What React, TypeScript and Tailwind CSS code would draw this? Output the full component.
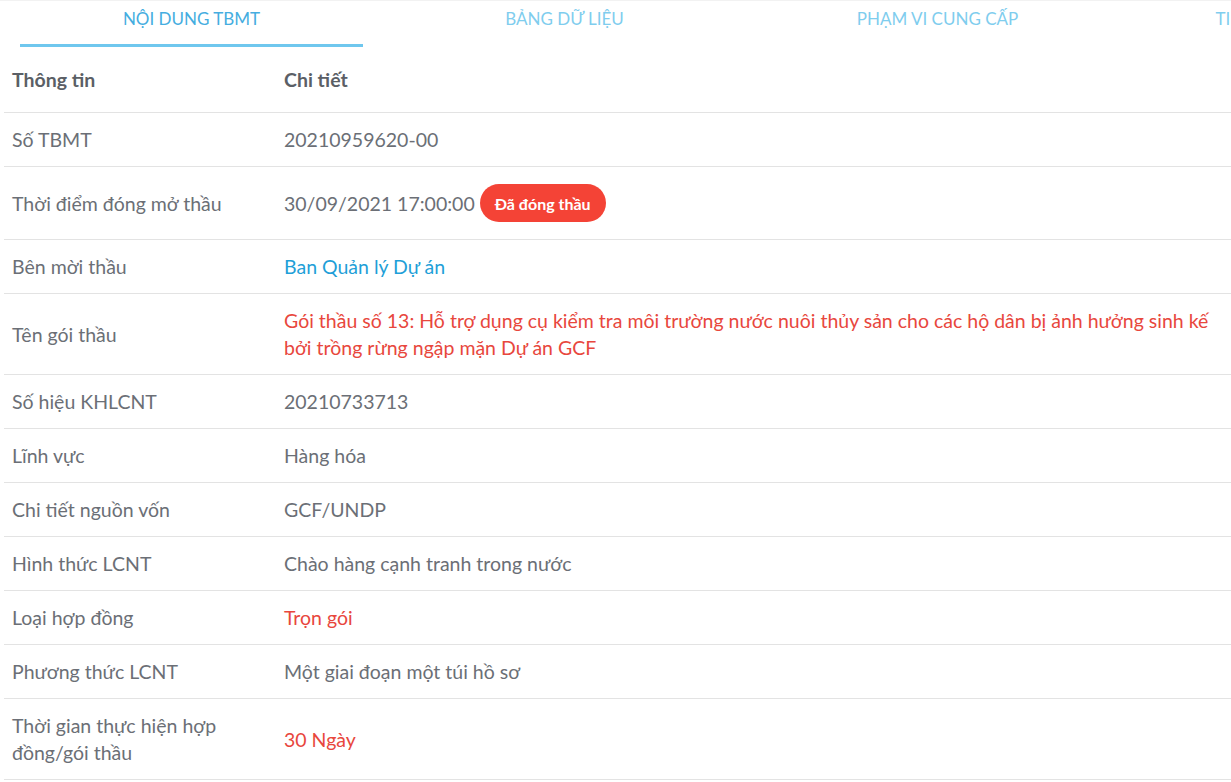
import React from "react";

type Row = {
  label: React.ReactNode;
  value: React.ReactNode;
  tone?: "blue" | "red";
  badge?: string;
};

const rows: Row[] = [
  { label: "Số TBMT", value: "20210959620-00" },
  { label: "Thời điểm đóng mở thầu", value: "30/09/2021 17:00:00", badge: "Đã đóng thầu" },
  { label: "Bên mời thầu", value: "Ban Quản lý Dự án", tone: "blue" },
  {
    label: "Tên gói thầu",
    value:
      "Gói thầu số 13: Hỗ trợ dụng cụ kiểm tra môi trường nước nuôi thủy sản cho các hộ dân bị ảnh hưởng sinh kế bởi trồng rừng ngập mặn Dự án GCF",
    tone: "red",
  },
  { label: "Số hiệu KHLCNT", value: "20210733713" },
  { label: "Lĩnh vực", value: "Hàng hóa" },
  { label: "Chi tiết nguồn vốn", value: "GCF/UNDP" },
  { label: "Hình thức LCNT", value: "Chào hàng cạnh tranh trong nước" },
  { label: "Loại hợp đồng", value: "Trọn gói", tone: "red" },
  { label: "Phương thức LCNT", value: "Một giai đoạn một túi hồ sơ" },
  { label: "Thời gian thực hiện hợp đồng/gói thầu", value: "30 Ngày", tone: "red" },
];

const tabs = ["NỘI DUNG TBMT", "BẢNG DỮ LIỆU", "PHẠM VI CUNG CẤP", "TIÊU CHUẨN ĐÁNH GIÁ"];

export default function App() {
  return (
    <div
      className="w-[1231px] h-[782px] overflow-hidden bg-white text-[19.5px]"
      style={{ fontFamily: "Lato, 'Noto Sans', sans-serif" }}
    >
      {/* TABS */}
      <div className="flex h-[47px] border-t border-[#f2f2f2] pl-[5px]">
        {tabs.map((t, i) => (
          <div key={t} className="w-[373px] shrink-0 px-[15px] flex flex-col">
            <div
              className={`flex-1 flex items-center justify-center pb-[8px] text-[17px] whitespace-nowrap ${
                i === 0 ? "text-[#45ade0]" : "text-[#7fcdee]"
              }`}
            >
              {t}
            </div>
            <div className={`h-[3px] ${i === 0 ? "bg-[#6fc7ee]" : ""}`} />
          </div>
        ))}
      </div>

      {/* TABLE */}
      <div className="ml-[4px]">
        <div className="flex border-b border-[#e3e3e3] py-[19px] leading-[27px] font-bold text-[#5b5f66]">
          <div className="w-[272px] shrink-0 px-[8px]">Thông tin</div>
          <div className="flex-1 px-[8px]">Chi tiết</div>
        </div>

        {rows.map((r, i) => (
          <div
            key={i}
            className="flex items-center border-b border-[#e3e3e3] py-[13px] leading-[27px] text-[#6b6f76]"
          >
            <div className="w-[272px] shrink-0 px-[8px] pr-[40px]">{r.label}</div>
            <div
              className={`flex-1 pl-[8px] flex items-center ${
                r.tone === "blue"
                  ? "text-[#1f9fd8]"
                  : r.tone === "red"
                  ? "text-[#e8473d]"
                  : "text-[#6b6f76]"
              }`}
            >
              <span className="max-w-[935px]">{r.value}</span>
              {r.badge && (
                <span className="ml-[5px] my-[4px] h-[38px] px-[15px] rounded-full bg-[#f44336] text-white font-bold text-[16px] flex items-center">
                  {r.badge}
                </span>
              )}
            </div>
          </div>
        ))}
      </div>
    </div>
  );
}
